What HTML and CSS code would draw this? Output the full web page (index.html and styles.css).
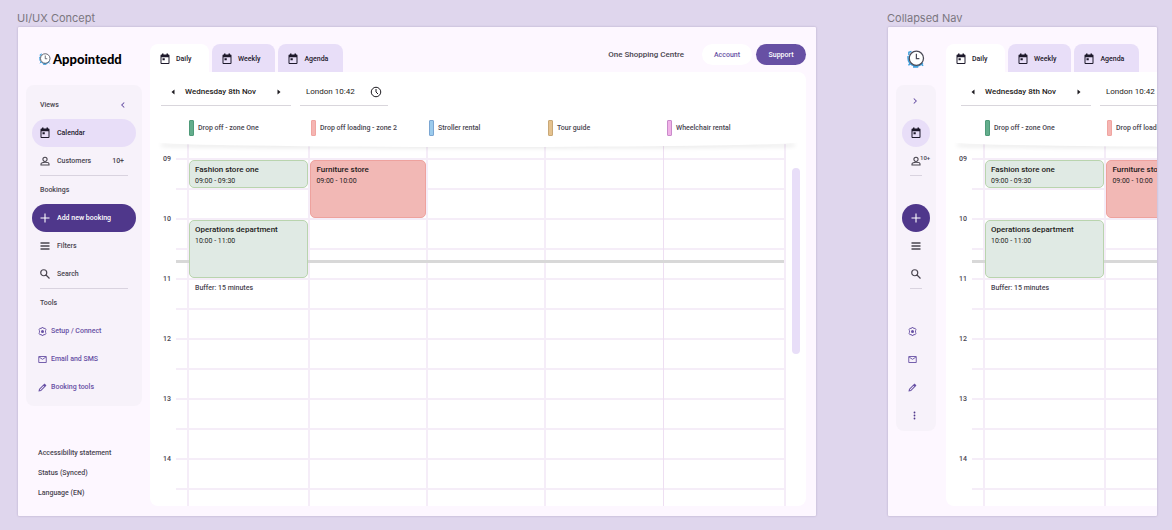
FILE: index.html
```html
<!DOCTYPE html>
<html lang="en">
<head>
<meta charset="utf-8">
<title>Appointedd calendar</title>
<link rel="stylesheet" href="styles.css">
</head>
<body>
<svg class="sprite" aria-hidden="true">
  <symbol id="i-cal" viewBox="0 0 24 24"><path d="M19 3h-1V1h-3v2H9V1H6v2H5a2 2 0 0 0-2 2v15a2 2 0 0 0 2 2h14a2 2 0 0 0 2-2V5a2 2 0 0 0-2-2zm0 17H5V8.500h14zM7 10.500h4.500v4H7z"/></symbol>
  <symbol id="i-person" viewBox="0 0 24 24"><path d="M12 4.500a4.200 4.200 0 1 1 0 8.400 4.200 4.200 0 0 1 0-8.400zM4 20v-2.200c0-2 4-3.300 8-3.300s8 1.300 8 3.300V20z" fill="none" stroke="currentColor" stroke-width="2.200"/></symbol>
  <symbol id="i-plus" viewBox="0 0 24 24"><path d="M12 3v18M3 12h18" fill="none" stroke="currentColor" stroke-width="2.200"/></symbol>
  <symbol id="i-menu" viewBox="0 0 24 24"><path d="M3 6h18M3 12h18M3 18h18" fill="none" stroke="currentColor" stroke-width="3"/></symbol>
  <symbol id="i-search" viewBox="0 0 24 24"><path d="M9.500 3.500a6 6 0 1 1 0 12 6 6 0 0 1 0-12zM14 14l7 7" fill="none" stroke="currentColor" stroke-width="2.400"/></symbol>
  <symbol id="i-gear" viewBox="0 0 24 24"><path d="M9 4l1-2.500h4L15 4l4-.5 2.500 4L20 10v4l1.500 2.500-2.500 4-4-.5-1 2.500h-4L9 20l-4 .5-2.500-4L4 14v-4L2.500 7.500 5 3.500z" fill="none" stroke="currentColor" stroke-width="2.400"/><circle cx="12" cy="12" r="4"/></symbol>
  <symbol id="i-mail" viewBox="0 0 24 24"><path d="M2 4h20v16H2zM3 5.500l9 6 9-6" fill="none" stroke="currentColor" stroke-width="2.400"/></symbol>
  <symbol id="i-pencil" viewBox="0 0 24 24"><path d="M3 21l1-4.500L14.500 6l3.500 3.500L7.500 20z" fill="none" stroke="currentColor" stroke-width="2.800"/><path d="M14 5l3.500-3.500 5 5L19 10z"/></symbol>
  <symbol id="i-dots" viewBox="0 0 24 24"><circle cx="12" cy="4" r="2.400"/><circle cx="12" cy="12" r="2.400"/><circle cx="12" cy="20" r="2.400"/></symbol>
  <symbol id="i-left" viewBox="0 0 24 24"><path d="M15 6l-6 6 6 6" fill="none" stroke="currentColor" stroke-width="2.500"/></symbol>
  <symbol id="i-right" viewBox="0 0 24 24"><path d="M9 6l6 6-6 6" fill="none" stroke="currentColor" stroke-width="2.500"/></symbol>
  <symbol id="i-prev" viewBox="0 0 24 24"><path d="M15 7v10l-6-5z"/></symbol>
  <symbol id="i-next" viewBox="0 0 24 24"><path d="M9 7v10l6-5z"/></symbol>
  <symbol id="i-clock" viewBox="0 0 24 24"><path d="M12 2.500a9.500 9.500 0 1 1 0 19 9.500 9.500 0 0 1 0-19zM12 6v6l4 4" fill="none" stroke="currentColor" stroke-width="2"/></symbol>
  <symbol id="i-brand" viewBox="0 0 24 24">
    <path d="M2.500 7V3l3.500-1M1.500 8c-1 8 3 13 10.500 13 4 0 7-1 9-4M8 22.500h7M18.500 18l3 3M12 20v3.500M4 18l-2 2.500" fill="none" stroke="#3f9fdc" stroke-width="2"/>
    <circle cx="12.500" cy="11" r="9.500" fill="#fff" stroke="#4b4b57" stroke-width="1.700"/>
    <path d="M12.500 5v6.500h4" fill="none" stroke="#4b4b57" stroke-width="1.600"/>
  </symbol>
</svg>

<div class="workspace">
  <section class="frame">
    <h2 class="frame-title">UI/UX Concept</h2>
    <div class="board">
      <aside class="sidebar">
        <div class="brand"><svg class="brand-mark"><use href="#i-brand"/></svg><span class="brand-name">Appointedd</span></div>
        <nav class="nav">
          <div class="nav-heading">Views<button class="fold" type="button" aria-label="Collapse"><svg class="icon"><use href="#i-left"/></svg></button></div>
          <a class="nav-item active" href="#"><svg class="icon"><use href="#i-cal"/></svg>Calendar</a>
          <a class="nav-item" href="#"><svg class="icon"><use href="#i-person"/></svg>Customers<span class="count">10+</span></a>
          <hr class="rule">
          <div class="nav-heading">Bookings</div>
          <button class="nav-item primary" type="button"><svg class="icon"><use href="#i-plus"/></svg>Add new booking</button>
          <button class="nav-item" type="button"><svg class="icon"><use href="#i-menu"/></svg>Filters</button>
          <button class="nav-item" type="button"><svg class="icon"><use href="#i-search"/></svg>Search</button>
          <hr class="rule">
          <div class="nav-heading">Tools</div>
          <a class="nav-item tool" href="#"><svg class="icon"><use href="#i-gear"/></svg>Setup / Connect</a>
          <a class="nav-item tool" href="#"><svg class="icon"><use href="#i-mail"/></svg>Email and SMS</a>
          <a class="nav-item tool" href="#"><svg class="icon"><use href="#i-pencil"/></svg>Booking tools</a>
        </nav>
        <div class="meta">
          <a href="#">Accessibility statement</a>
          <a href="#">Status (Synced)</a>
          <a href="#">Language (EN)</a>
        </div>
      </aside>
      <div class="content">
        <header class="topbar">
          <div class="tabs">
            <button class="tab selected" type="button"><svg class="icon"><use href="#i-cal"/></svg>Daily</button>
            <button class="tab" type="button"><svg class="icon"><use href="#i-cal"/></svg>Weekly</button>
            <button class="tab" type="button"><svg class="icon"><use href="#i-cal"/></svg>Agenda</button>
          </div>
          <span class="venue">One Shopping Centre</span>
          <button class="pill" type="button">Account</button>
          <button class="pill solid" type="button">Support</button>
        </header>
        <main class="calendar">
          <div class="toolbar">
            <div class="field date">
              <button class="step" type="button" aria-label="Previous day"><svg class="icon"><use href="#i-prev"/></svg></button>
              <strong>Wednesday 8th Nov</strong>
              <button class="step" type="button" aria-label="Next day"><svg class="icon"><use href="#i-next"/></svg></button>
            </div>
            <div class="field zone">London 10:42<svg class="icon"><use href="#i-clock"/></svg></div>
          </div>
          <div class="resources">
            <span class="resource green">Drop off - zone One</span>
            <span class="resource red">Drop off loading - zone 2</span>
            <span class="resource blue">Stroller rental</span>
            <span class="resource tan">Tour guide</span>
            <span class="resource pink">Wheelchair rental</span>
          </div>
          <div class="schedule">
            <div class="hours"><span>09</span><span>10</span><span>11</span><span>12</span><span>13</span><span>14</span></div>
            <div class="canvas">
              <div class="column">
                <article class="event green half"><h3>Fashion store one</h3><p>09:00 - 09:30</p></article>
                <article class="event green second"><h3>Operations department</h3><p>10:00 - 11:00</p></article>
                <p class="buffer">Buffer: 15 minutes</p>
              </div>
              <div class="column">
                <article class="event red"><h3>Furniture store</h3><p>09:00 - 10:00</p></article>
              </div>
              <div class="column"></div>
              <div class="column"></div>
              <div class="column thin"></div>
              <div class="now"></div>
            </div>
            <div class="scrollbar"></div>
          </div>
        </main>
      </div>
    </div>
  </section>

  <section class="frame">
    <h2 class="frame-title">Collapsed Nav</h2>
    <div class="board collapsed">
      <aside class="sidebar">
        <div class="brand"><svg class="brand-mark"><use href="#i-brand"/></svg></div>
        <nav class="nav">
          <div class="nav-heading"><button class="fold" type="button" aria-label="Expand"><svg class="icon"><use href="#i-right"/></svg></button></div>
          <a class="nav-item active" href="#" aria-label="Calendar"><svg class="icon"><use href="#i-cal"/></svg></a>
          <a class="nav-item" href="#" aria-label="Customers"><svg class="icon"><use href="#i-person"/></svg><span class="count">10+</span></a>
          <hr class="rule">
          <div class="nav-heading"></div>
          <button class="nav-item primary" type="button" aria-label="Add new booking"><svg class="icon"><use href="#i-plus"/></svg></button>
          <button class="nav-item" type="button" aria-label="Filters"><svg class="icon"><use href="#i-menu"/></svg></button>
          <button class="nav-item" type="button" aria-label="Search"><svg class="icon"><use href="#i-search"/></svg></button>
          <hr class="rule">
          <div class="nav-heading"></div>
          <a class="nav-item tool" href="#" aria-label="Setup / Connect"><svg class="icon"><use href="#i-gear"/></svg></a>
          <a class="nav-item tool" href="#" aria-label="Email and SMS"><svg class="icon"><use href="#i-mail"/></svg></a>
          <a class="nav-item tool" href="#" aria-label="Booking tools"><svg class="icon"><use href="#i-pencil"/></svg></a>
          <button class="nav-item more" type="button" aria-label="More"><svg class="icon"><use href="#i-dots"/></svg></button>
        </nav>
      </aside>
      <div class="content">
        <header class="topbar">
          <div class="tabs">
            <button class="tab selected" type="button"><svg class="icon"><use href="#i-cal"/></svg>Daily</button>
            <button class="tab" type="button"><svg class="icon"><use href="#i-cal"/></svg>Weekly</button>
            <button class="tab" type="button"><svg class="icon"><use href="#i-cal"/></svg>Agenda</button>
          </div>
        </header>
        <main class="calendar">
          <div class="toolbar">
            <div class="field date">
              <button class="step" type="button" aria-label="Previous day"><svg class="icon"><use href="#i-prev"/></svg></button>
              <strong>Wednesday 8th Nov</strong>
              <button class="step" type="button" aria-label="Next day"><svg class="icon"><use href="#i-next"/></svg></button>
            </div>
            <div class="field zone">London 10:42</div>
          </div>
          <div class="resources">
            <span class="resource green">Drop off - zone One</span>
            <span class="resource red">Drop off loading - zone 2</span>
          </div>
          <div class="schedule">
            <div class="hours"><span>09</span><span>10</span><span>11</span><span>12</span><span>13</span><span>14</span></div>
            <div class="canvas">
              <div class="column">
                <article class="event green half"><h3>Fashion store one</h3><p>09:00 - 09:30</p></article>
                <article class="event green second"><h3>Operations department</h3><p>10:00 - 11:00</p></article>
                <p class="buffer">Buffer: 15 minutes</p>
              </div>
              <div class="column">
                <article class="event red"><h3>Furniture store</h3><p>09:00 - 10:00</p></article>
              </div>
              <div class="column"></div>
              <div class="column"></div>
              <div class="column thin"></div>
              <div class="now"></div>
            </div>
          </div>
        </main>
      </div>
    </div>
  </section>
</div>
</body>
</html>
```

FILE: styles.css
```css
*, *::before, *::after { box-sizing: border-box; }

body {
  margin: 0;
  background: #dfd6ed;
  color: #49454f;
  font: 500 7px/12px Roboto, sans-serif;
}

h2, h3, p { margin: 0; }
a { color: inherit; text-decoration: none; }
button {
  margin: 0;
  padding: 0;
  border: 0;
  background: none;
  color: inherit;
  font: inherit;
  text-align: left;
  cursor: pointer;
}

.sprite { position: absolute; width: 0; height: 0; }
.icon { width: 12px; height: 12px; flex: none; fill: currentColor; display: block; }

/* Workspace */
.workspace {
  display: grid;
  grid-template-columns: minmax(0, 798fr) minmax(0, 269fr);
  column-gap: 72px;
  padding: 11px 15px 14px 18px;
}
.frame { display: flex; flex-direction: column; }
.frame-title {
  margin: 0 0 2px -1px;
  color: #7b7780;
  font: 400 11px/14px Inter, sans-serif;
}
.board {
  flex: 1;
  display: grid;
  grid-template-columns: 132px minmax(0, 1fr);
  overflow: hidden;
  border-radius: 1px;
  background: #fdf7ff;
  box-shadow: 0 0 2px rgba(60, 40, 90, 0.3);
}

/* Sidebar */
.sidebar {
  display: flex;
  flex-direction: column;
  padding: 17px 8px 13px;
}
.brand {
  display: flex;
  align-items: center;
  gap: 2px;
  height: 30px;
  margin-bottom: 11px;
  padding-left: 13px;
}
.brand-mark { width: 12px; height: 12px; }
.brand-name { color: #000; font: 900 13px/16px Lato, sans-serif; }
.nav {
  padding: 6px 6px 5px;
  border-radius: 8px;
  background: #f7f2fa;
}
.nav-heading {
  display: flex;
  align-items: center;
  justify-content: space-between;
  height: 28px;
  padding: 0 8px;
}
.fold { color: #6750a4; }
.fold .icon { width: 10px; height: 10px; }
.nav-item {
  display: flex;
  align-items: center;
  gap: 6px;
  width: 100%;
  height: 28px;
  padding: 0 12px 0 7px;
  border-radius: 14px;
}
.nav-item.active { background: #e8def8; color: #1d192b; }
.nav-item.primary { background: #4f378b; color: #fff; }
.nav-item.tool { gap: 4px; padding-left: 6px; color: #6750a4; }
.nav-item.tool .icon { width: 9px; height: 9px; }
.count { margin-left: auto; }
.rule {
  height: 1px;
  margin: 0 8px;
  border: 0;
  background: #d9d3df;
}
.meta {
  display: flex;
  flex-direction: column;
  margin-top: auto;
  padding-left: 12px;
  line-height: 20px;
}

/* Header */
.content {
  display: flex;
  flex-direction: column;
  padding: 17px 10px 10px 0;
}
.topbar { display: flex; align-items: flex-start; }
.tabs { display: flex; gap: 3px; margin-right: auto; }
.tab {
  display: flex;
  align-items: center;
  gap: 5px;
  min-width: 59px;
  height: 28px;
  padding: 2px 15px 0 9px;
  border-radius: 8px 8px 0 0;
  background: #e8def8;
  color: #1d192b;
}
.tab.selected { background: #fff; }
.venue { margin-right: 18px; font-size: 8px; line-height: 21px; }
.pill {
  width: 50px;
  height: 21px;
  border-radius: 11px;
  background: #fff;
  color: #6750a4;
  text-align: center;
}
.pill.solid { margin-left: 4px; background: #6750a4; color: #fff; }

/* Calendar */
.calendar {
  flex: 1;
  border-radius: 0 8px 8px 8px;
  background: #fff;
}
.toolbar { display: flex; gap: 9px; padding: 6px 11px 0; }
.field {
  display: flex;
  align-items: center;
  justify-content: space-between;
  height: 28px;
  padding: 0 6px;
  border-bottom: 1px solid #d9d6dc;
  color: #1d1b20;
  font-size: 8px;
}
.field strong { margin: 0 auto 0 6px; font-weight: 500; }
.date { width: 130px; }
.zone { width: 88px; font-weight: 400; }

.resources {
  position: relative;
  z-index: 1;
  display: grid;
  grid-template-columns: 122fr 118fr 119fr 119fr 122fr;
  align-items: center;
  height: 38px;
  padding: 6px 20px 0 36px;
}
.resources::after {
  content: "";
  position: absolute;
  z-index: -1;
  inset: auto 8px -3px 8px;
  height: 10px;
  border-radius: 0 0 50% 50% / 0 0 50% 50%;
  background: #fff;
  box-shadow: 0 4px 4px -3px rgba(0, 0, 0, 0.1);
}
.resource {
  display: flex;
  align-items: center;
  gap: 4px;
  padding-left: 3px;
  white-space: nowrap;
}
.resource::before {
  content: "";
  width: 5px;
  height: 16px;
  border: 1px solid;
  border-radius: 1px;
}
.resource.green::before { background: #63ad8c; border-color: #4f9a79; }
.resource.red::before { background: #f5b5b2; border-color: #f0a5a1; }
.resource.blue::before { background: #9bcbed; border-color: #7ba6d2; }
.resource.tan::before { background: #e5c28e; border-color: #c9a877; }
.resource.pink::before { background: #f0b2e7; border-color: #c98bcb; }

.schedule { display: flex; align-items: flex-start; }
.hours {
  width: 26px;
  padding: 9px 5px 0 0;
  text-align: right;
}
.hours span { display: block; height: 60px; }
.hours span:last-child { height: 12px; }
.canvas {
  position: relative;
  flex: 1;
  display: grid;
  grid-template-columns: 122fr 118fr 119fr 119fr 122fr;
  padding-left: 11px;
  border-right: 2px solid #f5edf8;
  background: linear-gradient(#f5edf8 2px, transparent 2px) 0 14px / 100% 30px;
}
.now {
  position: absolute;
  inset: 116px 0 auto 0;
  height: 3px;
  background: #d8d8d8;
}
.column {
  display: grid;
  grid-template-rows: 14px repeat(11, 30px) 18px;
  border-left: 2px solid #f5edf8;
}
.column.thin { border-left: 1px solid #eedff2; }
.event {
  position: relative;
  z-index: 1;
  grid-row: 2 / span 2;
  margin: 2px 0 0;
  padding: 3px 5px;
  border: 1px solid;
  border-radius: 5px;
  color: #1d1b20;
}
.event.half { grid-row: 2; }
.event.second { grid-row: 4 / span 2; }
.event.green { background: #e0eae4; border-color: #b9d4ae; }
.event.red { background: #f2b8b5; border-color: #eea29e; }
.event h3 { font-size: 8px; line-height: 12px; font-weight: 500; }
.event p { line-height: 10px; font-weight: 400; }
.buffer { grid-row: 6; padding: 4px 6px; }
.scrollbar {
  width: 8px;
  height: 186px;
  margin: 24px 6px 0;
  border-radius: 4px;
  background: #e8def8;
}

/* Collapsed navigation */
.board.collapsed { grid-template-columns: 58px 666px; }
.collapsed .brand { padding-left: 11px; }
.collapsed .brand-mark { width: 18px; height: 18px; }
.collapsed .nav { width: 40px; padding-bottom: 2px; }
.collapsed .nav-heading { justify-content: center; padding: 0 2px 8px 0; }
.collapsed .nav-item {
  position: relative;
  justify-content: center;
  padding: 0;
}
.collapsed .nav-item.tool { padding-right: 7px; }
.collapsed .nav-item.more { padding-right: 3px; color: #4f378b; }
.collapsed .more .icon { width: 9px; height: 9px; }
.collapsed .count {
  position: absolute;
  top: 7px;
  left: 18px;
  font-size: 6px;
  line-height: 8px;
}
.collapsed .toolbar { padding-left: 15px; }
.collapsed .canvas { margin-right: 20px; }
```
